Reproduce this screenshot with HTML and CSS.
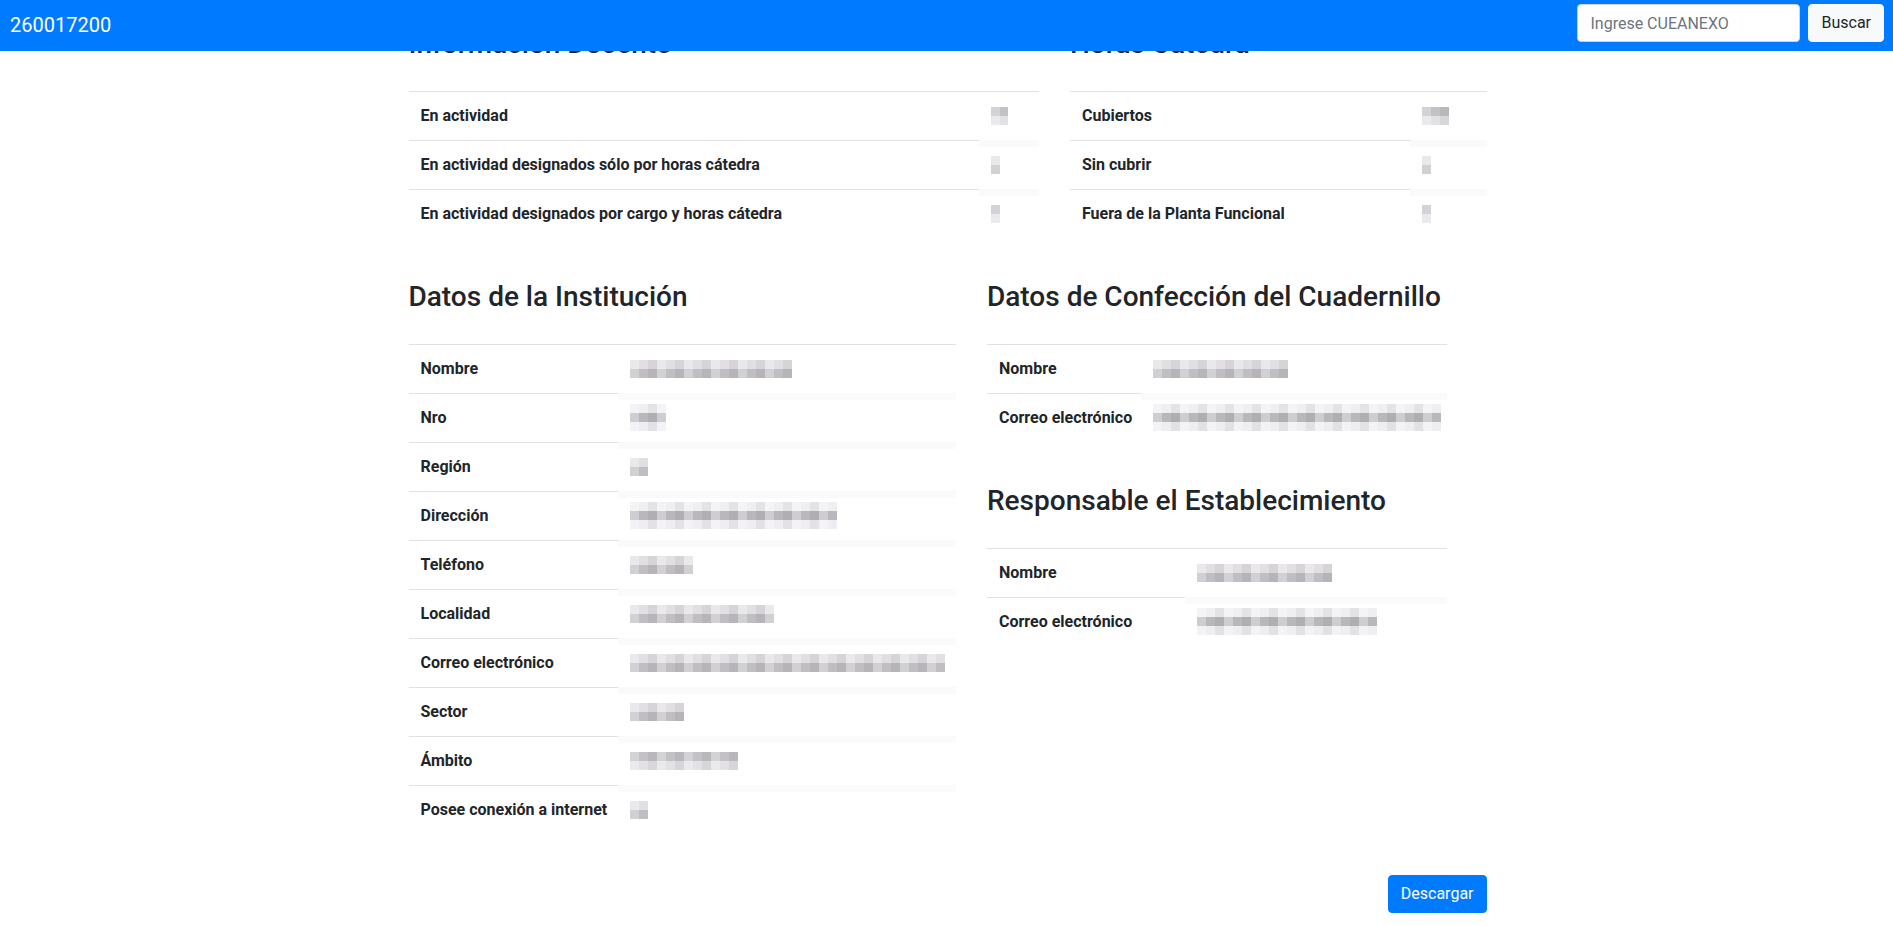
FILE: index.html
```html
<!DOCTYPE html>
<html lang="es">
<head>
<meta charset="utf-8">
<title>260017200</title>
<link rel="stylesheet" href="styles.css">
</head>
<body>
<nav class="navbar">
  <a class="brand" href="#">260017200</a>
  <form class="search">
    <input class="search-input" type="text" placeholder="Ingrese CUEANEXO">
    <button class="btn btn-light" type="button">Buscar</button>
  </form>
</nav>

<main class="page">
  <div class="row row-top">
    <section class="col col-docente">
      <h3 class="title">Información Docente</h3>
      <table class="table t-docente">
        <tr><th>En actividad</th><td><div class="blur dl" style="--w:17px"></div></td></tr>
        <tr><th>En actividad designados sólo por horas cátedra</th><td class="v"><div class="blur" style="--w:9px"></div></td></tr>
        <tr><th>En actividad designados por cargo y horas cátedra</th><td class="v"><div class="blur dl" style="--w:9px"></div></td></tr>
      </table>
    </section>
    <section class="col col-horas">
      <h3 class="title">Horas Cátedra</h3>
      <table class="table t-horas">
        <tr><th>Cubiertos</th><td><div class="blur dl" style="--w:27px"></div></td></tr>
        <tr><th>Sin cubrir</th><td class="v"><div class="blur" style="--w:9px"></div></td></tr>
        <tr><th>Fuera de la Planta Funcional</th><td class="v"><div class="blur dl" style="--w:9px"></div></td></tr>
      </table>
    </section>
  </div>

  <div class="row row-main">
    <section class="col col-inst">
      <h3 class="title">Datos de la Institución</h3>
      <table class="table t-inst">
        <tr><th>Nombre</th><td><div class="blur" style="--w:162px"></div></td></tr>
        <tr><th>Nro</th><td class="v"><div class="blur r3" style="--w:36px"></div></td></tr>
        <tr><th>Región</th><td class="v"><div class="blur" style="--w:18px"></div></td></tr>
        <tr><th>Dirección</th><td class="v"><div class="blur r3" style="--w:207px"></div></td></tr>
        <tr><th>Teléfono</th><td class="v"><div class="blur" style="--w:63px"></div></td></tr>
        <tr><th>Localidad</th><td class="v"><div class="blur" style="--w:144px"></div></td></tr>
        <tr><th>Correo electrónico</th><td class="v"><div class="blur" style="--w:315px"></div></td></tr>
        <tr><th>Sector</th><td class="v"><div class="blur" style="--w:54px"></div></td></tr>
        <tr><th>Ámbito</th><td class="v"><div class="blur dl" style="--w:108px"></div></td></tr>
        <tr><th>Posee conexión a internet</th><td class="v"><div class="blur" style="--w:18px"></div></td></tr>
      </table>
    </section>
    <section class="col col-side">
      <h3 class="title">Datos de Confección del Cuadernillo</h3>
      <table class="table t-conf">
        <tr><th>Nombre</th><td><div class="blur" style="--w:135px"></div></td></tr>
        <tr><th>Correo electrónico</th><td class="v"><div class="blur r3" style="--w:288px"></div></td></tr>
      </table>
      <h3 class="title">Responsable el Establecimiento</h3>
      <table class="table t-resp">
        <tr><th>Nombre</th><td><div class="blur" style="--w:135px"></div></td></tr>
        <tr><th>Correo electrónico</th><td class="v"><div class="blur r3" style="--w:180px"></div></td></tr>
      </table>
    </section>
  </div>

  <div class="actions">
    <button class="btn btn-primary" type="button">Descargar</button>
  </div>
</main>
</body>
</html>
```

FILE: styles.css
```css
* { box-sizing: border-box; }

body {
  margin: 0;
  font-family: Roboto, "Noto Sans", "Liberation Sans", sans-serif;
  font-size: 16px;
  line-height: 1.5;
  color: #212529;
  background: #fff;
}

/* ---------- navbar ---------- */
.navbar {
  position: fixed;
  top: 0;
  left: 0;
  right: 0;
  z-index: 10;
  height: 51px;
  background: #007bff;
  display: flex;
  align-items: flex-start;
  justify-content: space-between;
  padding: 4px 9px 0 10px;
}

.brand {
  color: #fff;
  font-size: 20px;
  line-height: 30px;
  padding-top: 6px;
  text-decoration: none;
}

.search {
  display: flex;
  gap: 8px;
  margin: 0;
}

.search-input {
  width: 223px;
  height: 38px;
  padding: 6px 12px;
  font: inherit;
  color: #495057;
  background: #fff;
  border: 1px solid #ced4da;
  border-radius: 4px;
}
.search-input::placeholder { color: #6c757d; opacity: 1; }

.btn {
  height: 38px;
  padding: 6px 12px;
  font: inherit;
  line-height: 24px;
  border-radius: 4px;
  border: 1px solid transparent;
  cursor: pointer;
}
.btn-light {
  background: #f8f9fa;
  border-color: #f8f9fa;
  color: #212529;
}
.btn-primary {
  background: #007bff;
  border-color: #007bff;
  color: #fff;
}

/* ---------- page ---------- */
.page {
  width: 1080px;
  margin: 0 auto;
  padding: 26.5px 0 0 2px;
}

.row {
  display: flex;
  gap: 31.5px;
  align-items: flex-start;
}

.col-docente { width: 630px; }
.col-horas { flex: 1; }
.col-inst { width: 547px; }
.col-side { flex: 1; }

.title {
  margin: 0 0 30.5px;
  font-size: 28px;
  font-weight: 500;
  line-height: 1.2;
}

/* ---------- tables ---------- */
.table {
  border-collapse: collapse;
  table-layout: fixed;
  width: 100%;
  margin-bottom: 42px;
}
.table th,
.table td {
  padding: 12px;
  vertical-align: top;
  border-top: 1px solid #dee2e6;
  text-align: left;
}
.table th {
  font-weight: 700;
  white-space: nowrap;
}
.table td.v {
  border-top-color: #f9f9f9;
  background: linear-gradient(#fafafa, #fafafa) no-repeat top left / 100% 6px;
}

.t-docente th { width: 570px; }
.t-horas th { width: 340px; }
.t-inst th { width: 209px; }
.t-inst { margin-bottom: 41px; }
.t-conf { width: 460px; }
.t-conf th { width: 154px; }
.t-resp { width: 460px; }
.t-resp th { width: 198px; }

/* redacted value mosaic */
.blur {
  width: var(--w);
  height: 18px;
  margin: 3px 0;
  background:
    repeating-linear-gradient(90deg, rgba(255,255,255,.28) 0 9px, rgba(255,255,255,0) 9px 18px, rgba(0,0,0,.05) 18px 27px),
    linear-gradient(#e1dfe2 0 50%, #c0bec3 50% 100%);
}
.blur.dl {
  background:
    repeating-linear-gradient(90deg, rgba(255,255,255,.28) 0 9px, rgba(255,255,255,0) 9px 18px, rgba(0,0,0,.05) 18px 27px),
    linear-gradient(#c3c1c6 0 50%, #e2e1e4 50% 100%);
}
.blur.r3 {
  height: 27px;
  margin: -1.5px 0;
  background:
    repeating-linear-gradient(90deg, rgba(255,255,255,.3) 0 9px, rgba(255,255,255,0) 9px 18px, rgba(0,0,0,.05) 18px 27px),
    linear-gradient(#efeef1 0 33%, #b9b7bc 33% 66%, #eeedf0 66% 100%);
}

/* ---------- actions ---------- */
.actions {
  display: flex;
  justify-content: flex-end;
  padding-bottom: 12px;
}
```
